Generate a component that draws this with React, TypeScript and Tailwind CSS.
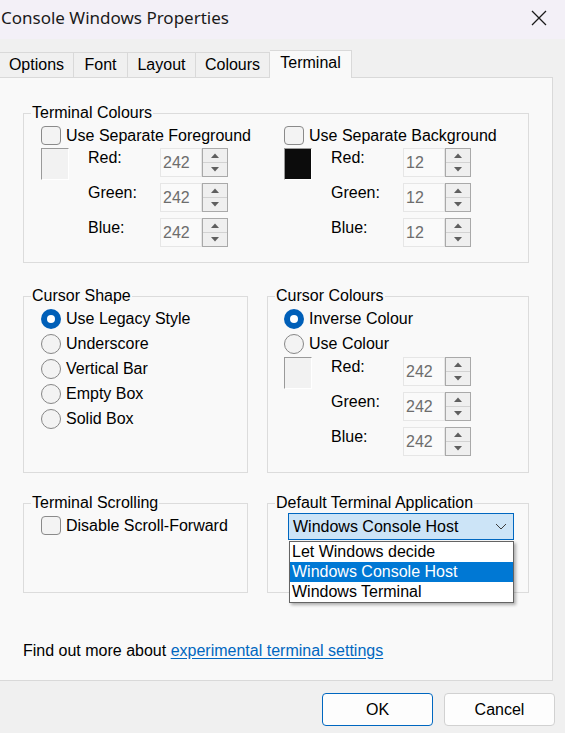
import React from 'react'

type Row = { label: string; value: string }

function Checkbox({ label }: { label: string }) {
  return (
    <div className="flex items-center gap-[5px] h-[19px]">
      <span className="w-[20px] h-[19px] rounded-[4px] border border-[#8a8a8a] bg-[#f3f3f3] shrink-0" />
      <span className="leading-[18px] whitespace-nowrap">{label}</span>
    </div>
  )
}

function Radio({ label, checked = false }: { label: string; checked?: boolean }) {
  return (
    <div className="flex items-center gap-[5px] h-[25px]">
      {checked ? (
        <span className="w-[20px] h-[20px] rounded-full bg-[#005fb8] flex items-center justify-center shrink-0">
          <span className="w-[8px] h-[8px] rounded-full bg-white" />
        </span>
      ) : (
        <span className="w-[20px] h-[20px] rounded-full border border-[#878787] bg-[#f3f3f3] shrink-0" />
      )}
      <span className="leading-[18px] whitespace-nowrap">{label}</span>
    </div>
  )
}

function Spinner({ value }: { value: string }) {
  return (
    <div className="flex h-[29px] w-[68px]">
      <div className="w-[42px] border border-[#e6e6e6] bg-[#fafafa] text-[#6d6d6d] pl-[2px] flex items-center leading-[18px]">
        {value}
      </div>
      <div className="w-[26px] flex flex-col border border-[#a9a9a9] bg-[#efefef]">
        <div className="flex-1 flex items-center justify-center border-b border-[#d2d2d2]">
          <svg width="8" height="5" viewBox="0 0 8 5">
            <path d="M0 5 L4 0.5 L8 5 Z" fill="#5f5f5f" />
          </svg>
        </div>
        <div className="flex-1 flex items-center justify-center">
          <svg width="8" height="5" viewBox="0 0 8 5">
            <path d="M0 0 L4 4.5 L8 0 Z" fill="#5f5f5f" />
          </svg>
        </div>
      </div>
    </div>
  )
}

function ColourBlock({ dark = false, rows }: { dark?: boolean; rows: Row[] }) {
  return (
    <div className="flex items-start">
      <span
        className={
          dark
            ? 'w-[28px] h-[32px] shrink-0 border border-t-[#9a9a9a] border-l-[#9a9a9a] border-r-white border-b-white bg-[#0c0c0c]'
            : 'w-[28px] h-[32px] shrink-0 border border-t-[#9a9a9a] border-l-[#9a9a9a] border-r-white border-b-white bg-[#f2f2f2]'
        }
      />
      <div className="ml-[19px] grid grid-cols-[72px_auto] gap-y-[6px]">
        {rows.map((r) => (
          <React.Fragment key={r.label}>
            <span className="leading-[18px] mt-[1px]">{r.label}</span>
            <Spinner value={r.value} />
          </React.Fragment>
        ))}
      </div>
    </div>
  )
}

function Group({ title, className, children }: { title: string; className: string; children: React.ReactNode }) {
  return (
    <fieldset className={'border border-[#dcdcdc] pl-[7px] ' + className}>
      <legend className="px-[1px] leading-[18px] whitespace-nowrap">{title}</legend>
      {children}
    </fieldset>
  )
}

const rgb = (v: string): Row[] => [
  { label: 'Red:', value: v },
  { label: 'Green:', value: v },
  { label: 'Blue:', value: v },
]

export default function App() {
  return (
    <div className="w-[565px] h-[733px] bg-[#f0f0f0] overflow-hidden text-[16px] text-black font-['Liberation_Sans',Arial,sans-serif]">
      {/* Title bar */}
      <div className="h-[39px] bg-[#f3f0f7] flex items-center justify-between pb-[3px]">
        <span className="pl-[1px] font-['Noto_Sans',sans-serif] text-[17px] text-[#1a1a1a]">
          Console Windows Properties
        </span>
        <svg width="16" height="16" viewBox="0 0 16 16" className="mr-[18px]">
          <path d="M1 1 L15 15 M15 1 L1 15" stroke="#1a1a1a" strokeWidth="1.3" />
        </svg>
      </div>

      {/* Tabs */}
      <div className="mt-[11px] flex items-end relative z-10 -mb-px">
        <div className="w-[74px] h-[26px] border-t border-r border-b border-[#d9d9d9] flex items-center justify-center">Options</div>
        <div className="w-[54px] h-[26px] border-t border-r border-b border-[#d9d9d9] flex items-center justify-center">Font</div>
        <div className="w-[68px] h-[26px] border-t border-r border-b border-[#d9d9d9] flex items-center justify-center">Layout</div>
        <div className="w-[74px] h-[26px] border-t border-r border-b border-[#d9d9d9] flex items-center justify-center">Colours</div>
        <div className="w-[82px] h-[28px] border-t border-r border-[#d9d9d9] bg-[#f9f9f9] flex items-center justify-center pb-[3px]">Terminal</div>
      </div>

      {/* Panel */}
      <div className="w-[553px] h-[604px] border border-l-0 border-[#d9d9d9] bg-[#f9f9f9] pl-[23px] pt-[26px]">
        <Group title="Terminal Colours" className="w-[506px] pb-[15px]">
          <div className="ml-[10px] grid grid-cols-[243px_auto]">
            <div>
              <div className="mt-[4px]">
                <Checkbox label="Use Separate Foreground" />
              </div>
              <div className="mt-[3px]">
                <ColourBlock rows={rgb('242')} />
              </div>
            </div>
            <div>
              <div className="mt-[4px]">
                <Checkbox label="Use Separate Background" />
              </div>
              <div className="mt-[3px]">
                <ColourBlock dark rows={rgb('12')} />
              </div>
            </div>
          </div>
        </Group>

        <div className="mt-[24px] flex gap-[19px]">
          <Group title="Cursor Shape" className="w-[225px]">
            <div className="ml-[10px] pt-[1px]">
              <Radio label="Use Legacy Style" checked />
              <Radio label="Underscore" />
              <Radio label="Vertical Bar" />
              <Radio label="Empty Box" />
              <Radio label="Solid Box" />
            </div>
          </Group>
          <Group title="Cursor Colours" className="w-[262px] pb-[16px]">
            <div className="ml-[9px] pt-[1px]">
              <Radio label="Inverse Colour" checked />
              <Radio label="Use Colour" />
              <div className="mt-[1px]">
                <ColourBlock rows={rgb('242')} />
              </div>
            </div>
          </Group>
        </div>

        <div className="mt-[21px] flex gap-[19px]">
          <Group title="Terminal Scrolling" className="w-[225px] h-[99px]">
            <div className="ml-[10px] mt-[4px]">
              <Checkbox label="Disable Scroll-Forward" />
            </div>
          </Group>
          <Group title="Default Terminal Application" className="w-[262px] h-[99px]">
            <div className="relative ml-[13px] mt-[1px] w-[226px] h-[27px] border border-[#0067c0] bg-[#cce4f7] flex items-center justify-between pl-[4px] pr-[6px]">
              <span className="leading-[18px]">Windows Console Host</span>
              <svg width="12" height="7" viewBox="0 0 12 7">
                <path d="M1 1 L6 6 L11 1" fill="none" stroke="#3c3c3c" strokeWidth="1" />
              </svg>
              {/* Open list */}
              <div className="absolute left-0 top-[27px] w-[225px] bg-white border border-[#646464] shadow-[2px_2px_3px_rgba(0,0,0,0.3)] z-20">
                <div className="h-[20px] flex items-center pl-[2px] leading-[18px]">Let Windows decide</div>
                <div className="h-[20px] flex items-center pl-[2px] leading-[18px] bg-[#0078d4] text-white">Windows Console Host</div>
                <div className="h-[20px] flex items-center pl-[2px] leading-[18px]">Windows Terminal</div>
              </div>
            </div>
          </Group>
        </div>

        <p className="mt-[49px] leading-[18px]">
          Find out more about{' '}
          <a href="#" className="text-[#0067c0] underline underline-offset-2">
            experimental terminal settings
          </a>
        </p>
      </div>

      {/* Buttons */}
      <div className="mt-[12px] flex justify-end gap-[11px] pr-[10px]">
        <button className="w-[111px] h-[33px] rounded-[4px] border border-[#0067c0] bg-[#fdfdfd]">OK</button>
        <button className="w-[111px] h-[33px] rounded-[4px] border border-[#d1d1d1] bg-[#fdfdfd]">Cancel</button>
      </div>
    </div>
  )
}
